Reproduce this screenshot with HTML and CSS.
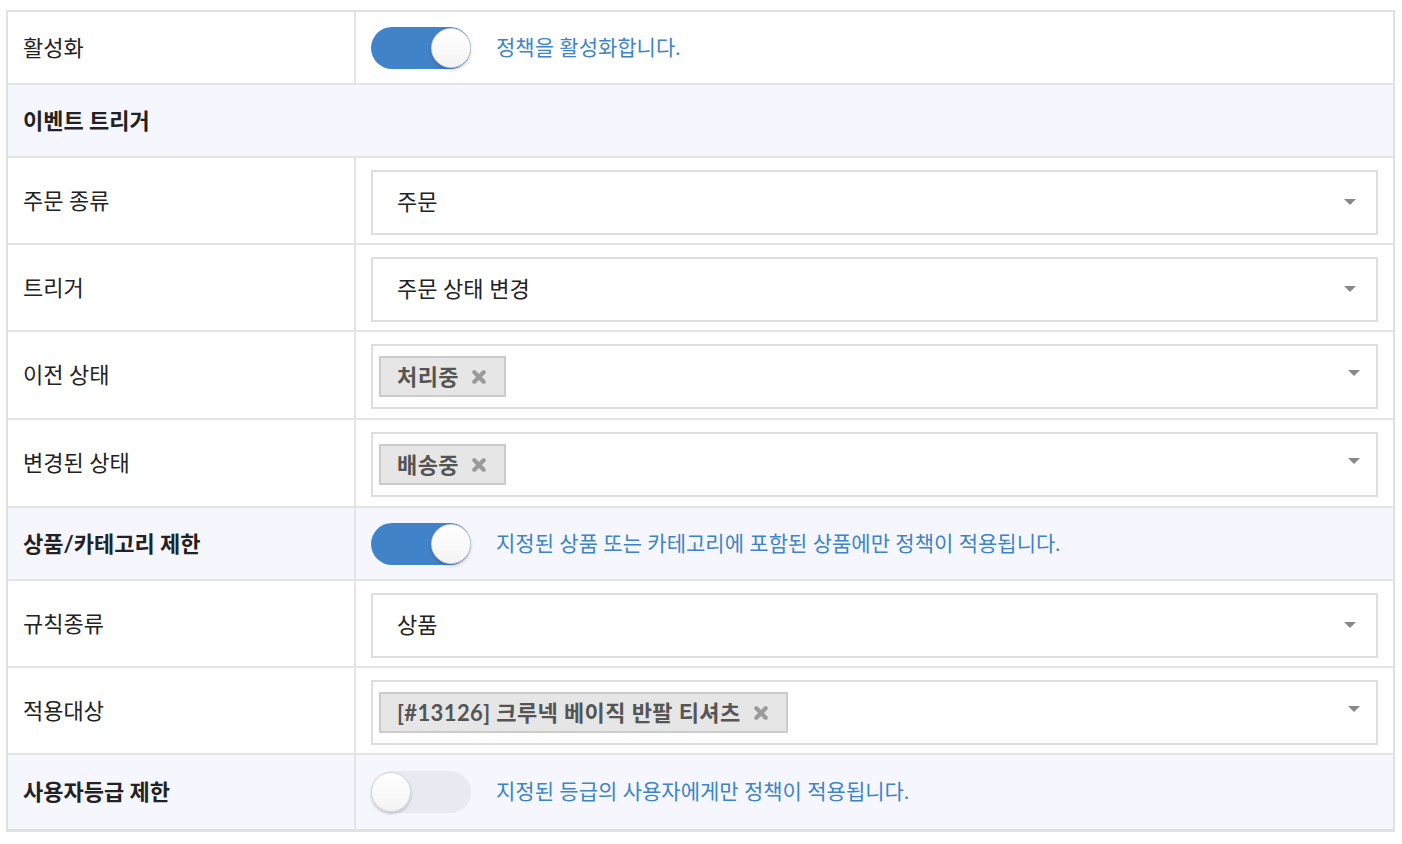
FILE: index.html
```html
<!DOCTYPE html>
<html lang="ko">
<head>
<meta charset="utf-8">
<link rel="stylesheet" href="styles.css">
</head>
<body>
<div class="form-table">
  <div class="row">
    <div class="label">활성화</div>
    <div class="value inline">
      <span class="toggle on"><span class="knob"></span></span>
      <span class="desc">정책을 활성화합니다.</span>
    </div>
  </div>
  <div class="row section">
    <div class="label full bold">이벤트 트리거</div>
  </div>
  <div class="row">
    <div class="label">주문 종류</div>
    <div class="value field"><div class="select"><span class="sel-text">주문</span><span class="caret"></span></div></div>
  </div>
  <div class="row">
    <div class="label">트리거</div>
    <div class="value field"><div class="select"><span class="sel-text">주문 상태 변경</span><span class="caret"></span></div></div>
  </div>
  <div class="row">
    <div class="label">이전 상태</div>
    <div class="value field tall"><div class="select multi"><span class="tag">처리중<svg class="x" viewBox="0 0 12 12"><path d="M2 2L10 10M10 2L2 10"/></svg></span><span class="caret"></span></div></div>
  </div>
  <div class="row">
    <div class="label">변경된 상태</div>
    <div class="value field tall"><div class="select multi"><span class="tag">배송중<svg class="x" viewBox="0 0 12 12"><path d="M2 2L10 10M10 2L2 10"/></svg></span><span class="caret"></span></div></div>
  </div>
  <div class="row section">
    <div class="label bold">상품/카테고리 제한</div>
    <div class="value inline">
      <span class="toggle on"><span class="knob"></span></span>
      <span class="desc">지정된 상품 또는 카테고리에 포함된 상품에만 정책이 적용됩니다.</span>
    </div>
  </div>
  <div class="row">
    <div class="label">규칙종류</div>
    <div class="value field"><div class="select"><span class="sel-text">상품</span><span class="caret"></span></div></div>
  </div>
  <div class="row">
    <div class="label">적용대상</div>
    <div class="value field"><div class="select multi"><span class="tag">[#13126] 크루넥 베이직 반팔 티셔츠<svg class="x" viewBox="0 0 12 12"><path d="M2 2L10 10M10 2L2 10"/></svg></span><span class="caret"></span></div></div>
  </div>
  <div class="row section last">
    <div class="label bold">사용자등급 제한</div>
    <div class="value inline">
      <span class="toggle"><span class="knob"></span></span>
      <span class="desc">지정된 등급의 사용자에게만 정책이 적용됩니다.</span>
    </div>
  </div>
</div>
</body>
</html>
```

FILE: styles.css
```css
html, body {
  margin: 0;
  background: #fff;
}
body {
  padding: 10px 7px 0 6px;
  font-family: "Lato", "Noto Sans CJK KR", sans-serif;
  font-size: 22px;
  color: #222;
}
.form-table {
  border: 2px solid #e1e1e1;
  border-bottom-width: 3px;
}
.row {
  display: grid;
  grid-template-columns: 348px 1fr;
  border-bottom: 2px solid #e4e4e4;
  min-height: 71px;
}
.row.last {
  border-bottom: none;
  min-height: 74px;
}
.row.section {
  background: #f6f7fe;
}
.label {
  display: flex;
  align-items: center;
  padding-left: 15px;
  padding-bottom: 4px;
  border-right: 2px solid #e4e4e4;
  color: #222;
}
.label.full {
  grid-column: 1 / -1;
  border-right: none;
}
.label.bold {
  font-weight: 700;
}
.value {
  display: flex;
  align-items: center;
  padding: 0 15px;
}
.value.inline {
  gap: 25px;
}
.value.field {
  padding: 12px 15px 8px 15px;
}
.value.field.tall {
  padding-bottom: 9px;
}
.toggle {
  position: relative;
  width: 100px;
  height: 42px;
  border-radius: 21px;
  background: #e8e9f1;
  flex: none;
}
.toggle.on {
  background: #4183c8;
}
.knob {
  position: absolute;
  top: 1px;
  left: 0;
  width: 38px;
  height: 38px;
  border-radius: 50%;
  background: linear-gradient(#ffffff, #f4f4f4);
  border: 1px solid #d6d6d6;
  box-shadow: 0 2px 3px rgba(0,0,0,0.18);
}
.toggle.on .knob {
  left: 60px;
}
.desc {
  color: #3c84c8;
  font-size: 21px;
  padding-bottom: 4px;
}
.select {
  flex: 1;
  height: 61px;
  border: 2px solid #dedede;
  display: flex;
  align-items: center;
  padding-left: 24px;
  padding-right: 20px;
  background: #fff;
}
.select.multi {
  padding-left: 6px;
  padding-right: 16px;
}
.sel-text {
  flex: 1;
  color: #222;
  padding-bottom: 5px;
}
.caret {
  margin-left: auto;
  width: 0;
  height: 0;
  border-left: 6px solid transparent;
  border-right: 6px solid transparent;
  border-top: 6px solid #888;
  margin-top: -2px;
}
.select.multi .caret {
  margin-top: -8px;
}
.tag {
  box-sizing: border-box;
  display: inline-flex;
  align-items: center;
  height: 41px;
  padding: 0 18px 3px 16px;
  background: #e6e6e6;
  border: 2px solid #cbcbcb;
  font-weight: 700;
  color: #555;
  gap: 13px;
  letter-spacing: 0.4px;
}
.x {
  width: 14px;
  height: 14px;
  stroke: #9a9a9a;
  stroke-width: 3.6;
  stroke-linecap: round;
  fill: none;
  margin-top: 4px;
}
```
